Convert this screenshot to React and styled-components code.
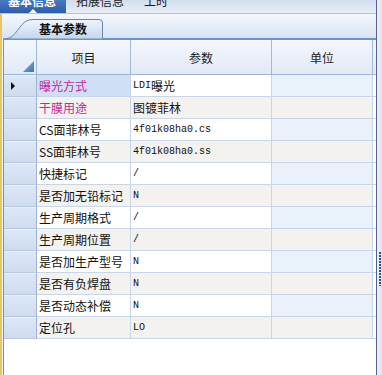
import React from 'react';
import styled, { createGlobalStyle } from 'styled-components';

const GlobalStyle = createGlobalStyle`
  html, body { margin: 0; padding: 0; background: #ffffff; overflow: hidden; }
  body { font-family: "Noto Sans CJK SC", "Liberation Sans", sans-serif; font-size: 12px; color: #111; }
`;

const Screen = styled.div`
  width: 382px;
  height: 375px;
  display: flex;
  overflow: hidden;
`;

const Panel = styled.div`
  width: 377px;
  flex: none;
  display: flex;
  flex-direction: column;
  border-right: 1px solid #4f6389;
  box-sizing: border-box;
`;

const Splitter = styled.div`
  flex: 1;
  position: relative;
  background: linear-gradient(to right, #eef0f4, #dfe3ea);
`;

const Grip = styled.div`
  position: absolute;
  left: 2px;
  top: 252px;
  width: 2px;
  height: 34px;
  background: repeating-linear-gradient(to bottom, #2e4f8f 0 2px, transparent 2px 3px);
`;

const TopTabs = styled.div`
  height: 14px;
  box-sizing: border-box;
  display: flex;
  align-items: flex-end;
  overflow: hidden;
  background: linear-gradient(#d2ddee, #e8eef7);
  border-bottom: 1px solid #b4c3d9;
`;

const TopTab = styled.div`
  position: relative;
  padding: 0 10px 5px ${p => (p.$first ? '8px' : '10px')};
  line-height: 14px;
  font-size: 12px;
  white-space: nowrap;
  color: ${p => (p.$active ? '#ffffff' : '#1a1a1a')};
  font-weight: ${p => (p.$active ? 'bold' : 'normal')};
  background: ${p => (p.$active ? 'linear-gradient(#5585cf, #2d5eae)' : 'transparent')};
  &::after {
    content: '';
    display: ${p => (p.$active ? 'block' : 'none')};
    position: absolute;
    left: 50%;
    bottom: 0;
    margin-left: -4px;
    border-left: 4px solid transparent;
    border-right: 4px solid transparent;
    border-bottom: 4px solid #ffffff;
  }
`;

const Body = styled.div`
  flex: 1;
  display: flex;
  flex-direction: column;
  border-left: 2px solid #f1c262;
  min-height: 0;
`;

const SubBar = styled.div`
  height: 24px;
  flex: none;
  box-sizing: border-box;
  display: flex;
  align-items: flex-end;
  padding-left: 5px;
  background: linear-gradient(#f5f8fc, #d8e3f3);
`;

const SubTab = styled.div`
  position: relative;
  width: 96px;
  height: 19px;
  box-sizing: border-box;
  padding-left: 32px;
  line-height: 19px;
  font-weight: bold;
  font-size: 12px;
  color: #111;
`;

const TabShape = styled.svg`
  position: absolute;
  left: 0;
  top: 0;
  width: 96px;
  height: 19px;
  overflow: visible;
`;

const TabLabel = styled.span`
  position: relative;
`;

const Grid = styled.div`
  flex: 1;
  display: flex;
  flex-direction: column;
  margin-left: 1px;
  border-left: 1px solid #7d90b0;
  border-top: 2px solid #7092c5;
  background: #ffffff;
`;

const columns = '33px 94px 141px 101px 1fr';

const HeaderRow = styled.div`
  display: grid;
  grid-template-columns: ${columns};
  height: 35px;
  flex: none;
  background: linear-gradient(#f4f7fc, #e0e9f6);
`;

const HeadCell = styled.div`
  position: relative;
  display: flex;
  align-items: center;
  justify-content: center;
  border-right: ${p => (p.$last ? 'none' : '1px solid #a5b8d5')};
  border-bottom: 1px solid #9fb3d2;
  font-size: 12px;
  color: #1c1c1c;
`;

const Corner = styled.svg`
  position: absolute;
  right: 2px;
  bottom: 2px;
  width: 11px;
  height: 11px;
`;

const Row = styled.div`
  display: grid;
  grid-template-columns: ${columns};
  height: 22px;
  flex: none;
`;

const RowHead = styled.div`
  position: relative;
  display: flex;
  align-items: center;
  padding-left: 3px;
  box-sizing: border-box;
  background: linear-gradient(#dde8f6, #cfdcef);
  border-right: 1px solid #9fb3d1;
  border-bottom: 1px solid #b8c8df;
  box-shadow: inset 0 1px 0 #e9f0fa;
`;

const Pointer = styled.span`
  width: 0;
  height: 0;
  margin-left: 4px;
  border-top: 4px solid transparent;
  border-bottom: 4px solid transparent;
  border-left: 4px solid #111;
`;

const Cell = styled.div`
  display: flex;
  align-items: center;
  padding-left: 2px;
  box-sizing: border-box;
  overflow: hidden;
  white-space: nowrap;
  font-size: 12px;
  background: ${p => p.$bg};
  color: ${p => p.$color || '#111'};
  border-right: ${p => (p.$last ? 'none' : '1px solid #c8d6ea')};
  border-bottom: 1px solid #c8d6ea;
`;

const Ascii = styled.span`
  font-family: "Liberation Mono", monospace;
  font-size: 10px;
`;

const rows = [
  ['曝光方式', 'LDI曝光', true],
  ['干膜用途', '图镀菲林', true],
  ['CS面菲林号', '4f01k08ha0.cs'],
  ['SS面菲林号', '4f01k08ha0.ss'],
  ['快捷标记', '/'],
  ['是否加无铅标记', 'N'],
  ['生产周期格式', '/'],
  ['生产周期位置', '/'],
  ['是否加生产型号', 'N'],
  ['是否有负焊盘', 'N'],
  ['是否动态补偿', 'N'],
  ['定位孔', 'LO'],
];

function Mixed({ text }) {
  const parts = text.match(/[\x00-\x7f]+|[^\x00-\x7f]+/g) || [];
  return parts.map((p, i) =>
    /^[\x00-\x7f]+$/.test(p) ? <Ascii key={i}>{p}</Ascii> : <span key={i}>{p}</span>
  );
}

export default function App() {
  return (
    <Screen>
      <GlobalStyle />
      <Panel>
        <TopTabs>
          <TopTab $active $first>基本信息</TopTab>
          <TopTab>拓展信息</TopTab>
          <TopTab>工时</TopTab>
        </TopTabs>
        <Body>
          <SubBar>
            <SubTab>
              <TabShape viewBox="0 0 96 19">
                <defs>
                  <linearGradient id="tabfill" x1="0" y1="0" x2="0" y2="1">
                    <stop offset="0" stopColor="#f0f5fc" />
                    <stop offset="1" stopColor="#c6d6ee" />
                  </linearGradient>
                </defs>
                <path
                  d="M0 19.5 C 8 19.5 13 4 20 1.8 Q 22.5 0.5 26 0.5 L 92 0.5 Q 95.5 0.5 95.5 4 L 95.5 19.5"
                  fill="url(#tabfill)"
                  stroke="#6b84a8"
                  strokeWidth="1"
                />
              </TabShape>
              <TabLabel>基本参数</TabLabel>
            </SubTab>
          </SubBar>
          <Grid>
            <HeaderRow>
              <HeadCell>
                <Corner viewBox="0 0 11 11">
                  <defs>
                    <linearGradient id="cornerfill" x1="0" y1="0" x2="1" y2="1">
                      <stop offset="0" stopColor="#8fb2e6" />
                      <stop offset="1" stopColor="#3f6fc0" />
                    </linearGradient>
                  </defs>
                  <path d="M11 0 L11 11 L0 11 Z" fill="url(#cornerfill)" />
                </Corner>
              </HeadCell>
              <HeadCell>项目</HeadCell>
              <HeadCell>参数</HeadCell>
              <HeadCell>单位</HeadCell>
              <HeadCell $last />
            </HeaderRow>
            {rows.map(([name, value, pink], i) => {
              const even = i % 2 === 1;
              const nameBg = i === 0 ? '#cfe0f6' : even ? '#f3f2ef' : '#ffffff';
              const valBg = even ? '#f3f2ef' : '#ffffff';
              const unitBg = even ? '#f3f2ef' : '#e9f1fb';
              return (
                <Row key={name}>
                  <RowHead>{i === 0 && <Pointer />}</RowHead>
                  <Cell $bg={nameBg} $color={pink ? '#c2279a' : '#111'}>{name}</Cell>
                  <Cell $bg={valBg}><Mixed text={value} /></Cell>
                  <Cell $bg={unitBg} />
                  <Cell $bg="#ffffff" $last />
                </Row>
              );
            })}
          </Grid>
        </Body>
      </Panel>
      <Splitter>
        <Grip />
      </Splitter>
    </Screen>
  );
}
